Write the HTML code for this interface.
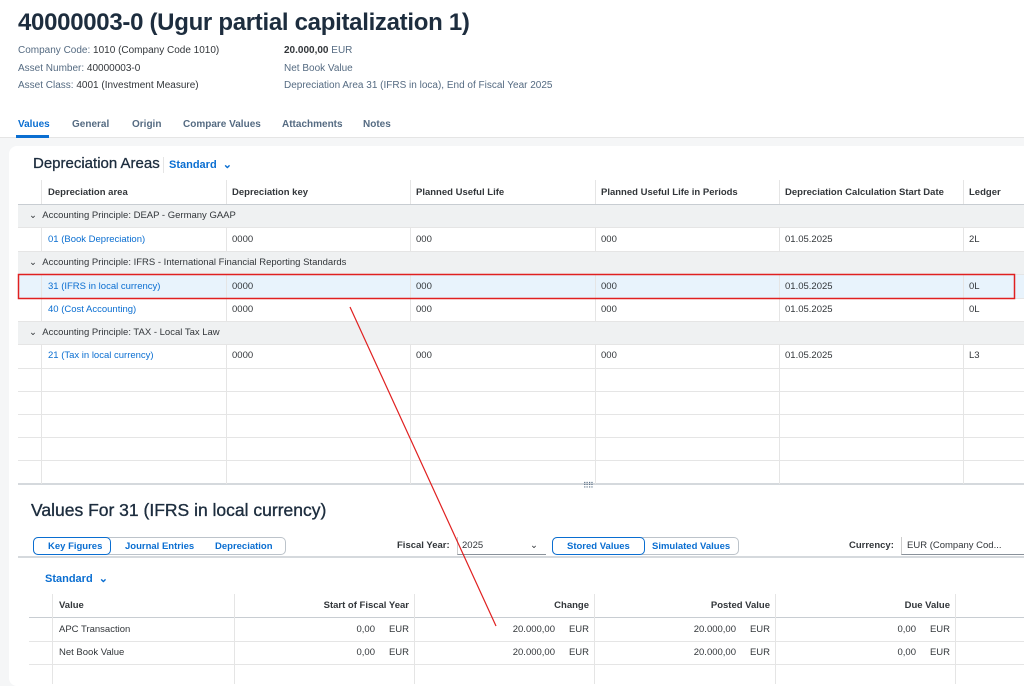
<!DOCTYPE html>
<html><head><meta charset="utf-8"><style>
*{box-sizing:border-box;margin:0;padding:0}
body{width:1024px;height:676px;overflow:hidden;background:#f5f6f7;font-family:"Liberation Sans",Arial,sans-serif;color:#32363a;position:relative}
.hdr{position:absolute;left:0;top:0;width:1024px;height:138px;background:#fff;border-bottom:1px solid #e5e5e5}
h1{position:absolute;left:18px;top:9px;font-size:24px;font-weight:bold;color:#1d2d3e;letter-spacing:-0.3px}
.kv{position:absolute;font-size:10px;color:#556b82;line-height:17.5px}
.kv b{font-weight:normal;color:#32363a}
.tabs{position:absolute;top:119px;font-size:10px;font-weight:bold;color:#556b82}
.tabs span{position:absolute;white-space:nowrap}
.card{position:absolute;left:9px;top:146px;width:1030px;height:540px;background:#fff;border-radius:8px}
.t{position:absolute;font-size:9.5px;white-space:nowrap}
.hl{position:absolute;height:1px;background:#e5e5e5}
.vl{position:absolute;width:1px;background:#e5e5e5}
.grp{position:absolute;left:18px;width:1010px;height:23px;background:#eff1f2}
a{color:#0a6ed1;text-decoration:none}
.th{font-weight:bold;color:#32363a}
.btn{position:absolute;height:18px;border:1px solid #bcc3ca;border-radius:5px;font-size:9.5px;font-weight:bold;color:#0a6ed1}
.btn span{position:absolute;top:3px;white-space:nowrap}
.sel{position:absolute;top:-1px;height:18px;border:1px solid #0a6ed1;border-radius:5px}
</style></head><body>
<div class="hdr">
<h1>40000003-0 (Ugur partial capitalization 1)</h1>
<div class="kv" style="left:18px;top:42px">Company Code: <b>1010 (Company Code 1010)</b><br>Asset Number: <b>40000003-0</b><br>Asset Class: <b>4001 (Investment Measure)</b></div>
<div class="kv" style="left:284px;top:42px"><b style="font-weight:bold">20.000,00</b> EUR<br>Net Book Value<br>Depreciation Area 31 (IFRS in loca), End of Fiscal Year 2025</div>
<div class="tabs"><span style="left:18px;color:#0a6ed1">Values</span><span style="left:72px">General</span><span style="left:132px">Origin</span><span style="left:183px">Compare Values</span><span style="left:282px">Attachments</span><span style="left:363px">Notes</span></div>
<div style="position:absolute;left:16px;top:135px;width:33px;height:3px;background:#0a6ed1"></div>
</div>
<div class="card"></div>
<div class="t" style="left:33px;top:155px;font-size:15px;color:#1d2d3e;-webkit-text-stroke:0.3px #1d2d3e">Depreciation Areas</div>
<div class="vl" style="left:163px;top:157px;height:16px"></div>
<div class="t" style="left:169px;top:158px;font-size:11px;font-weight:bold;color:#0a6ed1">Standard &nbsp;⌄</div>
<div class="grp" style="top:204px"></div><div class="grp" style="top:251px"></div><div class="grp" style="top:321px"></div>
<div style="position:absolute;left:18px;top:274px;width:1010px;height:24px;background:#e8f3fc"></div>
<div class="hl" style="left:18px;top:204px;width:1010px;background:#c8cdd2"></div>
<div class="hl" style="left:18px;top:227px;width:1010px"></div><div class="hl" style="left:18px;top:251px;width:1010px"></div><div class="hl" style="left:18px;top:274px;width:1010px"></div><div class="hl" style="left:18px;top:298px;width:1010px"></div><div class="hl" style="left:18px;top:321px;width:1010px"></div><div class="hl" style="left:18px;top:344px;width:1010px"></div><div class="hl" style="left:18px;top:368px;width:1010px"></div><div class="hl" style="left:18px;top:391px;width:1010px"></div><div class="hl" style="left:18px;top:414px;width:1010px"></div><div class="hl" style="left:18px;top:437px;width:1010px"></div><div class="hl" style="left:18px;top:460px;width:1010px"></div><div class="hl" style="left:18px;top:483px;width:1010px;background:#d5d9dd;height:2px"></div>
<div class="vl" style="left:41px;top:180px;height:24px"></div>
<div class="vl" style="left:226px;top:180px;height:24px"></div><div class="vl" style="left:410px;top:180px;height:24px"></div><div class="vl" style="left:595px;top:180px;height:24px"></div><div class="vl" style="left:779px;top:180px;height:24px"></div><div class="vl" style="left:963px;top:180px;height:24px"></div>
<div class="vl" style="left:41px;top:227px;height:24px"></div><div class="vl" style="left:226px;top:227px;height:24px"></div><div class="vl" style="left:410px;top:227px;height:24px"></div><div class="vl" style="left:595px;top:227px;height:24px"></div><div class="vl" style="left:779px;top:227px;height:24px"></div><div class="vl" style="left:963px;top:227px;height:24px"></div>
<div class="vl" style="left:41px;top:274px;height:47px"></div><div class="vl" style="left:226px;top:274px;height:47px"></div><div class="vl" style="left:410px;top:274px;height:47px"></div><div class="vl" style="left:595px;top:274px;height:47px"></div><div class="vl" style="left:779px;top:274px;height:47px"></div><div class="vl" style="left:963px;top:274px;height:47px"></div>
<div class="vl" style="left:41px;top:344px;height:140px"></div><div class="vl" style="left:226px;top:344px;height:140px"></div><div class="vl" style="left:410px;top:344px;height:140px"></div><div class="vl" style="left:595px;top:344px;height:140px"></div><div class="vl" style="left:779px;top:344px;height:140px"></div><div class="vl" style="left:963px;top:344px;height:140px"></div>
<div class="t th" style="left:48px;top:187px">Depreciation area</div><div class="t th" style="left:232px;top:187px">Depreciation key</div><div class="t th" style="left:416px;top:187px">Planned Useful Life</div><div class="t th" style="left:601px;top:187px">Planned Useful Life in Periods</div><div class="t th" style="left:785px;top:187px">Depreciation Calculation Start Date</div><div class="t th" style="left:969px;top:187px">Ledger</div>
<div class="t" style="left:29px;top:210px">⌄ &nbsp;Accounting Principle: DEAP - Germany GAAP</div>
<div class="t" style="left:29px;top:257px">⌄ &nbsp;Accounting Principle: IFRS - International Financial Reporting Standards</div>
<div class="t" style="left:29px;top:327px">⌄ &nbsp;Accounting Principle: TAX - Local Tax Law</div>
<div class="t" style="left:48px;top:234px"><a>01 (Book Depreciation)</a></div><div class="t" style="left:232px;top:234px">0000</div><div class="t" style="left:416px;top:234px">000</div><div class="t" style="left:601px;top:234px">000</div><div class="t" style="left:785px;top:234px">01.05.2025</div><div class="t" style="left:969px;top:234px">2L</div>
<div class="t" style="left:48px;top:281px"><a>31 (IFRS in local currency)</a></div><div class="t" style="left:232px;top:281px">0000</div><div class="t" style="left:416px;top:281px">000</div><div class="t" style="left:601px;top:281px">000</div><div class="t" style="left:785px;top:281px">01.05.2025</div><div class="t" style="left:969px;top:281px">0L</div>
<div class="t" style="left:48px;top:304px"><a>40 (Cost Accounting)</a></div><div class="t" style="left:232px;top:304px">0000</div><div class="t" style="left:416px;top:304px">000</div><div class="t" style="left:601px;top:304px">000</div><div class="t" style="left:785px;top:304px">01.05.2025</div><div class="t" style="left:969px;top:304px">0L</div>
<div class="t" style="left:48px;top:350px"><a>21 (Tax in local currency)</a></div><div class="t" style="left:232px;top:350px">0000</div><div class="t" style="left:416px;top:350px">000</div><div class="t" style="left:601px;top:350px">000</div><div class="t" style="left:785px;top:350px">01.05.2025</div><div class="t" style="left:969px;top:350px">L3</div>
<div class="t" style="left:583px;top:481px;font-size:8px;letter-spacing:-1px;color:#556b82">⠿⠿</div>
<div class="t" style="left:31px;top:500px;font-size:17.5px;color:#1d2d3e;-webkit-text-stroke:0.35px #1d2d3e">Values For 31 (IFRS in local currency)</div>
<div class="btn" style="left:33px;top:537px;width:253px"><div class="sel" style="left:-1px;width:78px"></div><span style="left:14px">Key Figures</span><span style="left:91px">Journal Entries</span><span style="left:181px">Depreciation</span></div>
<div class="t th" style="left:397px;top:540px">Fiscal Year:</div>
<div style="position:absolute;left:457px;top:537px;width:89px;height:18px;border-bottom:1px solid #89919a;border-left:1px solid #ccc;font-size:9.5px;padding:3px 4px">2025<span style="position:absolute;right:8px">⌄</span></div>
<div class="btn" style="left:552px;top:537px;width:187px"><div class="sel" style="left:-1px;width:93px"></div><span style="left:14px">Stored Values</span><span style="left:99px">Simulated Values</span></div>
<div class="t th" style="left:849px;top:540px">Currency:</div>
<div style="position:absolute;left:901px;top:537px;width:130px;height:18px;border-bottom:1px solid #89919a;border-left:1px solid #ccc;font-size:9.5px;padding:3px 5px;white-space:nowrap">EUR (Company Cod...</div>
<div class="hl" style="left:18px;top:556px;width:1010px;background:#d5d9dd;height:2px"></div>
<div class="t" style="left:45px;top:572px;font-size:11px;font-weight:bold;color:#0a6ed1">Standard &nbsp;⌄</div>
<div class="hl" style="left:29px;top:617px;width:1000px;background:#c8cdd2"></div><div class="hl" style="left:29px;top:641px;width:1000px"></div><div class="hl" style="left:29px;top:664px;width:1000px"></div>
<div class="vl" style="left:52px;top:594px;height:90px"></div><div class="vl" style="left:234px;top:594px;height:90px"></div><div class="vl" style="left:414px;top:594px;height:90px"></div><div class="vl" style="left:594px;top:594px;height:90px"></div><div class="vl" style="left:775px;top:594px;height:90px"></div><div class="vl" style="left:955px;top:594px;height:90px"></div>
<div class="t th" style="left:59px;top:600px">Value</div>
<div class="t th" style="right:615px;top:600px">Start of Fiscal Year</div><div class="t th" style="right:435px;top:600px">Change</div><div class="t th" style="right:254px;top:600px">Posted Value</div><div class="t th" style="right:74px;top:600px">Due Value</div>
<div class="t" style="left:59px;top:624px">APC Transaction</div><div class="t" style="left:59px;top:647px">Net Book Value</div>
<div class="t" style="right:649px;top:624px">0,00</div><div class="t" style="right:615px;top:624px">EUR</div><div class="t" style="right:469px;top:624px">20.000,00</div><div class="t" style="right:435px;top:624px">EUR</div><div class="t" style="right:288px;top:624px">20.000,00</div><div class="t" style="right:254px;top:624px">EUR</div><div class="t" style="right:108px;top:624px">0,00</div><div class="t" style="right:74px;top:624px">EUR</div>
<div class="t" style="right:649px;top:647px">0,00</div><div class="t" style="right:615px;top:647px">EUR</div><div class="t" style="right:469px;top:647px">20.000,00</div><div class="t" style="right:435px;top:647px">EUR</div><div class="t" style="right:288px;top:647px">20.000,00</div><div class="t" style="right:254px;top:647px">EUR</div><div class="t" style="right:108px;top:647px">0,00</div><div class="t" style="right:74px;top:647px">EUR</div>
<svg style="position:absolute;left:0;top:0" width="1024" height="676"><rect x="18.5" y="274.5" width="996" height="24" fill="none" stroke="#e02020" stroke-width="1.5"/><line x1="350" y1="307" x2="496" y2="626" stroke="#e02020" stroke-width="1.2"/></svg>
</body></html>
